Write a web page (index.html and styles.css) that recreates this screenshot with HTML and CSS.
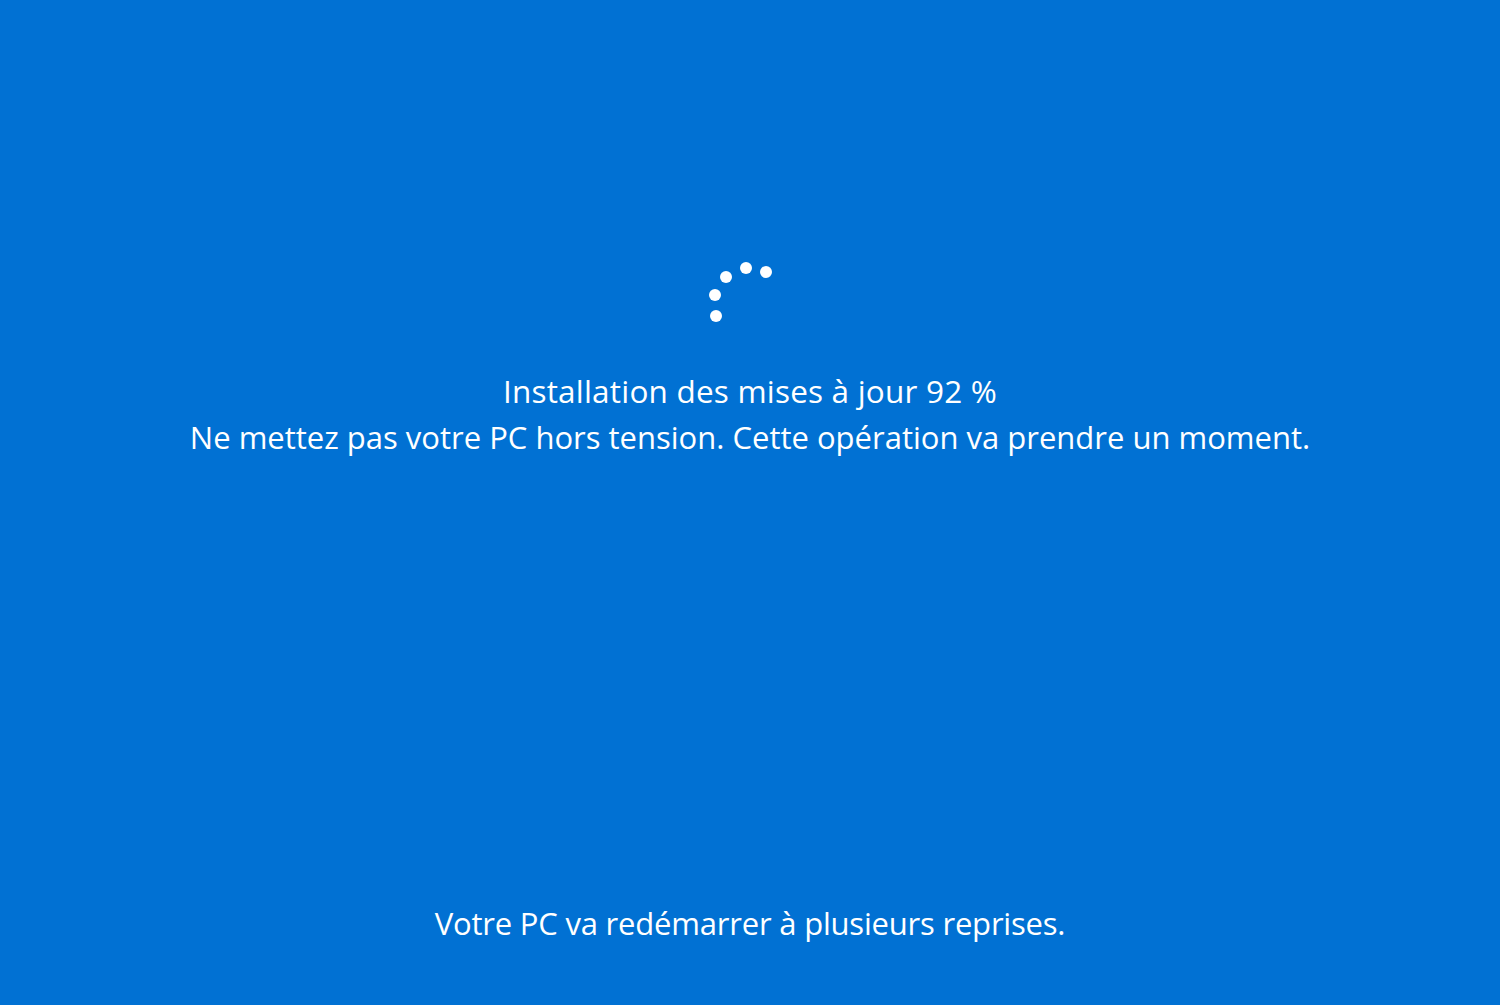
FILE: index.html
```html
<!DOCTYPE html>
<html lang="fr">
<head>
    <meta charset="utf-8">
    <meta name="viewport" content="width=device-width, initial-scale=1.0">
    <title>Mise à jour</title>
    <link rel="stylesheet" href="styles.css">
</head>
<body>
    <div class="screen">
        <div class="center">
            <div class="spinner">
                <span class="dot d1"></span>
                <span class="dot d2"></span>
                <span class="dot d3"></span>
                <span class="dot d4"></span>
                <span class="dot d5"></span>
            </div>
            <div class="status">
                <p class="line1">Installation des mises à jour 92 %</p>
                <p>Ne mettez pas votre PC hors tension. Cette opération va prendre un moment.</p>
            </div>
        </div>
        <p class="footer">Votre PC va redémarrer à plusieurs reprises.</p>
    </div>
</body>
</html>
```

FILE: styles.css
```css
* {
    margin: 0;
    padding: 0;
    box-sizing: border-box;
}

html, body {
    height: 100%;
}

body {
    font-family: "Open Sans", "Noto Sans", sans-serif;
    background: #0171d3;
    color: #fff;
    overflow: hidden;
}

.screen {
    height: 100vh;
    display: flex;
    flex-direction: column;
    align-items: center;
    padding-top: 262px;
    padding-bottom: 59px;
}

.center {
    flex: 1;
    display: flex;
    flex-direction: column;
    align-items: center;
}

.spinner {
    position: relative;
    width: 70px;
    height: 60px;
    margin-left: -17px;
    margin-bottom: 46px;
}

.dot {
    position: absolute;
    width: 12px;
    height: 12px;
    border-radius: 50%;
    background: #fff;
}

/* dot centres taken from the screenshot, relative to the spinner box */
.d1 { left: 4px;  top: 48px; }
.d2 { left: 3px;  top: 27px; }
.d3 { left: 14px; top: 9px; }
.d4 { left: 34px; top: 0; }
.d5 { left: 54px; top: 4px; }

.status {
    text-align: center;
    font-size: 31px;
    line-height: 46px;
}

.status .line1 {
    font-size: 31.5px;
    letter-spacing: 0.2px;
}

.footer {
    font-size: 31px;
    line-height: 46px;
    letter-spacing: -0.2px;
}
```
